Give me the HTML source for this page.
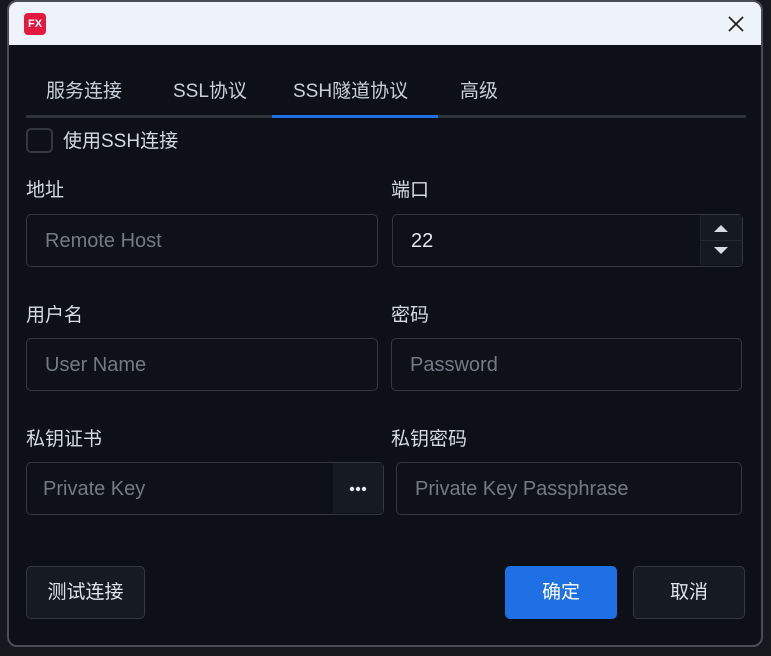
<!DOCTYPE html>
<html><head><meta charset="utf-8"><style>
*{box-sizing:border-box;margin:0;padding:0}
body{width:771px;height:656px;background:#16181d;font-family:"Liberation Sans","Noto Sans CJK SC",sans-serif;position:relative;overflow:hidden;color:#d6dbe3}
.win{position:absolute;left:7px;top:0px;width:756px;height:647px;border:2px solid #4a4d53;border-radius:10px;background:#0d1017;overflow:hidden}
.title{position:absolute;left:0;top:0;right:0;height:43px;background:#eef3f9}
.logo{position:absolute;left:15px;top:11px;width:22px;height:22px;background:#e3193f;border-radius:4px;color:#fff;font-size:11px;font-weight:bold;text-align:center;line-height:22px}
.abs{position:absolute}
.tab{position:absolute;top:74px;font-size:19px;color:#c9d0da}
.lbl{position:absolute;font-size:19px;color:#d6dbe3}
.inp{position:absolute;height:53px;border:1.5px solid #33373e;border-radius:5px;background:#0e1118;font-size:20px;color:#747a84;padding-left:18px;line-height:52px}
.btn{position:absolute;height:53px;border:1.5px solid #33373e;border-radius:5px;background:#161a21;font-size:19px;color:#dfe3ea;text-align:center;line-height:52px}
</style></head><body>
<div class="win">
<div class="title"><div class="logo">FX</div>
<svg class="abs" style="left:718px;top:13px" width="18" height="18"><path d="M2 2L16 16M16 2L2 16" stroke="#222" stroke-width="1.8"/></svg></div>
<div class="tab" style="left:37px">服务连接</div>
<div class="tab" style="left:164px">SSL协议</div>
<div class="tab" style="left:284px">SSH隧道协议</div>
<div class="tab" style="left:451px">高级</div>
<div class="abs" style="left:17px;top:113px;width:720px;height:3px;background:#2e3239"></div>
<div class="abs" style="left:263px;top:113px;width:166px;height:3px;background:#1f6fe5"></div>
<div class="abs" style="left:17px;top:126px;width:27px;height:25px;border:2px solid #33373e;border-radius:5px"></div>
<div class="lbl" style="left:54px;top:124px">使用SSH连接</div>
<div class="lbl" style="left:17px;top:173px">地址</div>
<div class="lbl" style="left:382px;top:173px">端口</div>
<div class="inp" style="left:17px;top:212px;width:352px">Remote Host</div>
<div class="inp" style="left:383px;top:212px;width:351px;color:#e6e9ee;padding-left:18px">22
<div class="abs" style="right:0;top:0;width:42px;height:50px;background:#151920;border-left:1px solid #1d2128">
<svg class="abs" style="left:12px;top:9px" width="16" height="32"><path d="M1 8L8 1L15 8Z M1 23L15 23L8 30Z" fill="#d8dce2"/></svg>
<div class="abs" style="left:0;top:25px;width:42px;height:1px;background:#262a31"></div></div></div>
<div class="lbl" style="left:17px;top:298px">用户名</div>
<div class="lbl" style="left:382px;top:298px">密码</div>
<div class="inp" style="left:17px;top:336px;width:352px">User Name</div>
<div class="inp" style="left:382px;top:336px;width:351px">Password</div>
<div class="lbl" style="left:17px;top:422px">私钥证书</div>
<div class="lbl" style="left:382px;top:422px">私钥密码</div>
<div class="inp" style="left:17px;top:460px;width:358px;padding-left:16px">Private Key
<div class="abs" style="right:0;top:0;width:50px;height:50px;background:#161a21">
<svg class="abs" style="left:16px;top:23px" width="18" height="6"><circle cx="3" cy="3" r="2.2" fill="#e6e9ee"/><circle cx="9" cy="3" r="2.2" fill="#e6e9ee"/><circle cx="15" cy="3" r="2.2" fill="#e6e9ee"/></svg></div></div>
<div class="inp" style="left:387px;top:460px;width:346px">Private Key Passphrase</div>
<div class="btn" style="left:17px;top:564px;width:119px">测试连接</div>
<div class="btn" style="left:496px;top:564px;width:112px;background:#1f6fe5;border-color:#1f6fe5;color:#fff">确定</div>
<div class="btn" style="left:624px;top:564px;width:112px">取消</div>
</div>
</body></html>
